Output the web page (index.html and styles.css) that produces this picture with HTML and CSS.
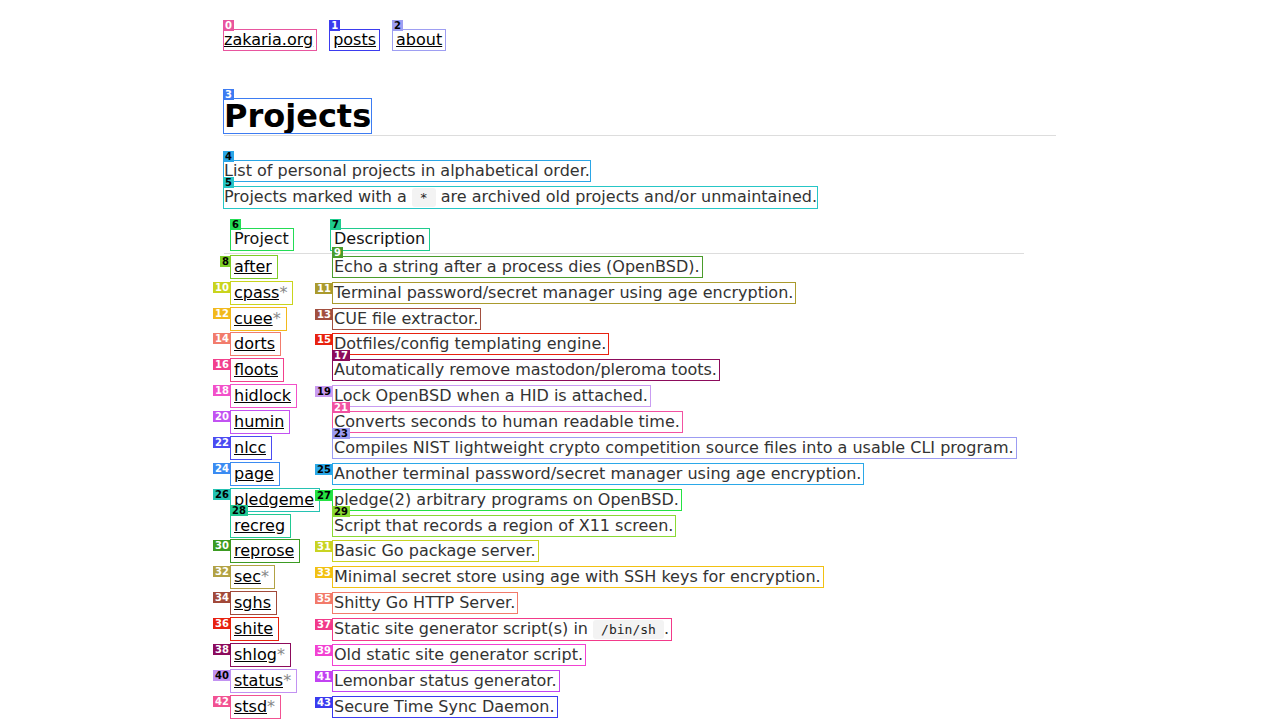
FILE: index.html
```html
<!DOCTYPE html>
<html lang="en">
<head>
<meta charset="utf-8">
<title>Projects - zakaria.org</title>
<link rel="stylesheet" href="styles.css">
</head>
<body>
<div class="page">
  <nav class="nav">
    <a class="mk c0 home" href="#">zakaria.org<span class="tag ta">0</span></a>
    <a class="mk c1" href="#">posts<span class="tag ta">1</span></a>
    <a class="mk c2" href="#">about<span class="tag ta dk">2</span></a>
  </nav>
  <main>
    <h1><span class="mk c3">Projects<span class="tag ta">3</span></span></h1>
    <p><span class="mk c4">List of personal projects in alphabetical order.<span class="tag ta dk">4</span></span></p>
    <p><span class="mk c5">Projects marked with a <code>*</code> are archived old projects and/or unmaintained.<span class="tag ta dk">5</span></span></p>
    <table class="projects">
      <thead>
        <tr>
          <th><span class="mk hd c6">Project<span class="tag ta dk">6</span></span></th>
          <th><span class="mk hd c7">Description<span class="tag ta dk">7</span></span></th>
        </tr>
      </thead>
      <tbody>
        <tr><td><span class="mk nm c8"><span class="clip"><a href="#">after</a></span><span class="tag tl dk">8</span></span></td><td><span class="mk ds c9">Echo a string after a process dies (OpenBSD).<span class="tag ta">9</span></span></td></tr>
        <tr><td><span class="mk nm c10"><span class="clip"><a href="#">cpass</a></span><span class="star">*</span><span class="tag tl">10</span></span></td><td><span class="mk ds c11">Terminal password/secret manager using age encryption.<span class="tag tl">11</span></span></td></tr>
        <tr><td><span class="mk nm c12"><span class="clip"><a href="#">cuee</a></span><span class="star">*</span><span class="tag tl">12</span></span></td><td><span class="mk ds c13">CUE file extractor.<span class="tag tl">13</span></span></td></tr>
        <tr><td><span class="mk nm c14"><span class="clip"><a href="#">dorts</a></span><span class="tag tl">14</span></span></td><td><span class="mk ds c15">Dotfiles/config templating engine.<span class="tag tl">15</span></span></td></tr>
        <tr><td><span class="mk nm c16"><span class="clip"><a href="#">floots</a></span><span class="tag tl">16</span></span></td><td><span class="mk ds c17">Automatically remove mastodon/pleroma toots.<span class="tag ta">17</span></span></td></tr>
        <tr><td><span class="mk nm c18"><span class="clip"><a href="#">hidlock</a></span><span class="tag tl">18</span></span></td><td><span class="mk ds c19">Lock OpenBSD when a HID is attached.<span class="tag tl dk">19</span></span></td></tr>
        <tr><td><span class="mk nm c20"><span class="clip"><a href="#">humin</a></span><span class="tag tl">20</span></span></td><td><span class="mk ds c21">Converts seconds to human readable time.<span class="tag ta">21</span></span></td></tr>
        <tr><td><span class="mk nm c22"><span class="clip"><a href="#">nlcc</a></span><span class="tag tl">22</span></span></td><td><span class="mk ds c23">Compiles NIST lightweight crypto competition source files into a usable CLI program.<span class="tag ta dk">23</span></span></td></tr>
        <tr><td><span class="mk nm c24"><span class="clip"><a href="#">page</a></span><span class="tag tl">24</span></span></td><td><span class="mk ds c25">Another terminal password/secret manager using age encryption.<span class="tag tl dk">25</span></span></td></tr>
        <tr><td><span class="mk nm c26"><span class="clip"><a href="#">pledgement</a></span><span class="tag tl dk">26</span></span></td><td><span class="mk ds c27">pledge(2) arbitrary programs on OpenBSD.<span class="tag tl dk">27</span></span></td></tr>
        <tr><td><span class="mk nm c28"><span class="clip"><a href="#">recreg</a></span><span class="tag ta dk">28</span></span></td><td><span class="mk ds c29">Script that records a region of X11 screen.<span class="tag ta dk">29</span></span></td></tr>
        <tr><td><span class="mk nm c30"><span class="clip"><a href="#">reprose</a></span><span class="tag tl">30</span></span></td><td><span class="mk ds c31">Basic Go package server.<span class="tag tl">31</span></span></td></tr>
        <tr><td><span class="mk nm c32"><span class="clip"><a href="#">sec</a></span><span class="star">*</span><span class="tag tl">32</span></span></td><td><span class="mk ds c33">Minimal secret store using age with SSH keys for encryption.<span class="tag tl">33</span></span></td></tr>
        <tr><td><span class="mk nm c34"><span class="clip"><a href="#">sghs</a></span><span class="tag tl">34</span></span></td><td><span class="mk ds c35">Shitty Go HTTP Server.<span class="tag tl">35</span></span></td></tr>
        <tr><td><span class="mk nm c36"><span class="clip"><a href="#">shite</a></span><span class="tag tl">36</span></span></td><td><span class="mk ds c37">Static site generator script(s) in <code>/bin/sh</code>.<span class="tag tl">37</span></span></td></tr>
        <tr><td><span class="mk nm c38"><span class="clip"><a href="#">shlog</a></span><span class="star">*</span><span class="tag tl">38</span></span></td><td><span class="mk ds c39">Old static site generator script.<span class="tag tl">39</span></span></td></tr>
        <tr><td><span class="mk nm c40"><span class="clip"><a href="#">status</a></span><span class="star">*</span><span class="tag tl dk">40</span></span></td><td><span class="mk ds c41">Lemonbar status generator.<span class="tag tl">41</span></span></td></tr>
        <tr><td><span class="mk nm c42"><span class="clip"><a href="#">stsd</a></span><span class="star">*</span><span class="tag tl">42</span></span></td><td><span class="mk ds c43">Secure Time Sync Daemon.<span class="tag tl">43</span></span></td></tr>
      </tbody>
    </table>
  </main>
</div>
</body>
</html>
```
FILE: styles.css
```css
html, body {
  background: #fff;
}

body {
  margin: 0;
  font-family: "DejaVu Sans", "Noto Sans", sans-serif;
  font-size: 16px;
  line-height: 1.6;
  color: #333;
}

.page {
  max-width: 832px;
  margin: 0 auto;
  padding-top: 30px;
}

a {
  color: #000;
  text-decoration: underline;
}

.nav {
  display: flex;
  gap: 14px;
  height: 20px;
}

.nav a {
  padding: 0 3px;
}

.nav a.home {
  padding-left: 0;
}

h1 {
  margin: 49px 0 22px;
  padding-bottom: 2px;
  font-size: 32px;
  line-height: 34px;
  font-weight: bold;
  color: #000;
  border-bottom: 1px solid #ddd;
}

h1 .mk {
  line-height: 34px;
}

p {
  margin: 0;
}

code {
  font-family: "DejaVu Sans Mono", "Liberation Mono", monospace;
  font-size: 13px;
  background: #f3f3f3;
  padding: 2px 8px;
  border-radius: 3px;
  color: #222;
}

.projects {
  margin-top: 17px;
  border-collapse: collapse;
}

.projects th {
  text-align: left;
  font-weight: normal;
  color: #111;
  padding: 0 10px 1px;
  border-bottom: 1px solid #ddd;
}

.projects td {
  padding: 0 10px;
  height: 25.86px;
  vertical-align: middle;
}

.clip {
  display: inline-block;
  max-width: 80px;
  overflow: hidden;
  white-space: nowrap;
  vertical-align: top;
}

.star {
  color: #888;
}

/* annotation marks */
.mk {
  position: relative;
  display: inline-block;
  line-height: 20px;
  outline: 1px solid var(--c);
}

.mk.hd {
  padding: 0 4px 1px 3px;
  margin: 0 -4px 0 -3px;
}

.mk.nm {
  padding: 1px 5px 1px 3px;
  margin: 0 -5px 0 -3px;
}

.mk.ds {
  padding: 0 2px 0 1px;
  margin: 0 -2px 0 -1px;
}

.tag {
  position: absolute;
  font-family: "DejaVu Sans", sans-serif;
  font-size: 10px;
  font-weight: bold;
  line-height: 11px;
  padding: 0 2px;
  color: #fff;
  background: var(--c);
  text-decoration: none;
  white-space: nowrap;
}

.tag.dk {
  color: #000;
}

.ta {
  bottom: calc(100% - 1px);
  left: -1px;
}

.tl {
  top: 0;
  right: 100%;
}

.c0 { --c: #e8559e; }
.c1 { --c: #3b3bef; }
.c2 { --c: #9e9ef2; }
.c3 { --c: #3d7cf2; }
.c4 { --c: #2ba6e6; }
.c5 { --c: #26c6c6; }
.c6 { --c: #23dc55; }
.c7 { --c: #1fcb8e; }
.c8 { --c: #7fce27; }
.c9 { --c: #4a9c2b; }
.c10 { --c: #c9d41d; }
.c11 { --c: #aa9a2d; }
.c12 { --c: #f2b91c; }
.c13 { --c: #a24f3f; }
.c14 { --c: #f27c6c; }
.c15 { --c: #e8220f; }
.c16 { --c: #f2408c; }
.c17 { --c: #8c0b5c; }
.c18 { --c: #f250c9; }
.c19 { --c: #c99cf2; }
.c20 { --c: #c252f2; }
.c21 { --c: #f252a2; }
.c22 { --c: #4b4bf2; }
.c23 { --c: #9c9cf2; }
.c24 { --c: #3b8bf2; }
.c25 { --c: #2ba8e8; }
.c26 { --c: #24c2b2; }
.c27 { --c: #25e243; }
.c28 { --c: #21c992; }
.c29 { --c: #8ad933; }
.c30 { --c: #3c9b22; }
.c31 { --c: #c9d422; }
.c32 { --c: #b2a244; }
.c33 { --c: #f2c112; }
.c34 { --c: #a2493a; }
.c35 { --c: #f27a6a; }
.c36 { --c: #e8220f; }
.c37 { --c: #f23a8a; }
.c38 { --c: #8c0b5c; }
.c39 { --c: #f242d2; }
.c40 { --c: #c292f2; }
.c41 { --c: #c242f2; }
.c42 { --c: #f25292; }
.c43 { --c: #3b3bef; }
```
